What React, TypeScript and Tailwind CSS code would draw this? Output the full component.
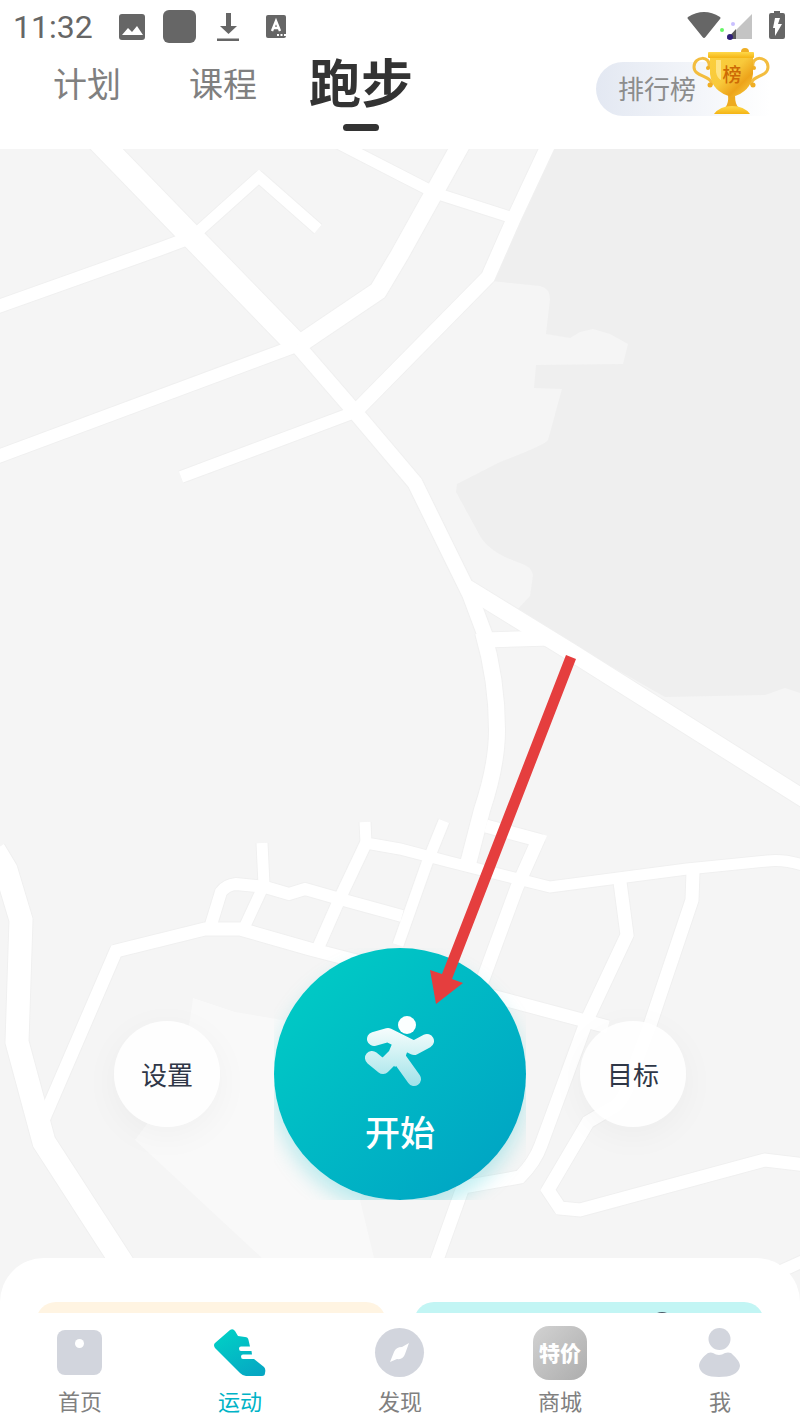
import React, { useState } from "react";

const TABS = ["计划", "课程", "跑步"];

interface Road {
  d: string;
  width: number;
}

const ROADS: Road[] = [
  { d: "M97 139L192 237L297 345", width: 23 },
  { d: "M192 237L160 249L-6 308", width: 13 },
  { d: "M192 237L259 177L318 229", width: 11 },
  { d: "M298 345L-6 458", width: 13 },
  { d: "M298 345L378 291L400 254L464 139", width: 18 },
  { d: "M297 345L355 412L415 483L470 595L485 635", width: 15 },
  { d: "M355 412L181 477", width: 12 },
  { d: "M355 412L488 277L514 218L551 139", width: 14 },
  { d: "M330 139L400 175L435 193L510 217", width: 11 },
  { d: "M467 588L571 652L806 800", width: 17 },
  { d: "M484 640L550 638", width: 15 },
  { d: "M483 632Q497 680 497 730Q497 765 482 810L468 864", width: 16 },
  { d: "M365 822L366 843L400 849L450 862L550 887L687 869L767 861Q785 859 806 866", width: 11 },
  { d: "M366 843L340 898L318 948", width: 12 },
  { d: "M444 821L427 863L398 945", width: 11 },
  { d: "M486 826L538 840L517 887L482 982", width: 13 },
  { d: "M210 928L221 892Q226 885 236 884L265 887L289 894L305 889L340 899L402 916", width: 12 },
  { d: "M262 843L264 885L244 928", width: 11 },
  { d: "M44 1118L116 951L205 929L240 929L310 949L507 1000L608 1027", width: 13 },
  { d: "M-6 850L6 870L21 920L17 1042L44 1142L128 1272", width: 23 },
  { d: "M620 882L627 935L587 1020L541 1145Q535 1162 520 1177L463 1187L434 1268", width: 13 },
  { d: "M693 872L692 900L650 1025L633 1070Q625 1102 612 1108L588 1122L548 1190L560 1208L580 1210L765 1160L806 1165", width: 13 },
  { d: "M770 1276L810 1258", width: 12 },
];

const StreetMap = () => (
  <svg
    className="absolute inset-0 h-full w-full"
    viewBox="0 149 800 1164"
    preserveAspectRatio="xMidYMin slice"
    aria-hidden="true"
  >
    <rect x="0" y="149" width="800" height="1164" fill="#f5f5f5" />
    <path
      d="M546 149H800V693L785 688L765 695L665 697L515 612L530 596L533 575Q531 566 520 563Q490 553 480 536L456 492L457 484L500 462Q545 445 548 440L562 389L534 388L536 365L623 364L628 344L610 334L593 329L580 332L570 338L546 334L550 300Q550 288 540 286L492 281L514 218Z"
      fill="#efefef"
    />
    <path d="M193 998L235 1012L400 1040L360 1200L374 1258H262L135 1140Q175 1090 190 1020Z" fill="#f9f9f9" />
    <g fill="none" stroke="#f0f0f0" strokeLinejoin="round">
      {ROADS.map((road) => (
        <path key={road.d} d={road.d} strokeWidth={road.width + 2} />
      ))}
    </g>
    <g fill="none" stroke="#ffffff">
      {ROADS.map((road) => (
        <path key={road.d} d={road.d} strokeWidth={road.width} />
      ))}
    </g>
  </svg>
);

const Pointer = () => (
  <svg
    className="pointer-events-none absolute inset-0 h-full w-full"
    viewBox="0 149 800 1164"
    preserveAspectRatio="xMidYMin slice"
    aria-hidden="true"
  >
    <path d="M566 655L576 659L452 979L463 983L436 1004L430 970L442 974Z" fill="#e53e3e" />
  </svg>
);

const StatusBar = () => (
  <div className="flex h-[54px] items-center pl-[13px] pr-1.5 text-[#666666]">
    <span className="w-[89px] font-['Roboto',sans-serif] text-[32px] font-normal leading-10">11:32</span>
    <div className="ml-3 flex flex-1 gap-3">
      <svg className="h-9 w-9" viewBox="0 0 36 36">
        <rect x="5" y="5" width="26" height="26" rx="3" fill="currentColor" />
        <path d="M8 26L14 19L18 23L23 17L29 26Z" fill="#fff" />
      </svg>
      <svg className="h-9 w-9" viewBox="0 0 36 36">
        <rect x="1" y="1" width="33" height="33" rx="6" fill="currentColor" />
      </svg>
      <svg className="h-9 w-9" viewBox="0 0 36 36" fill="currentColor">
        <path d="M16 4H21V17H27L18.500 25L10 17H16ZM7 29.500H29V32H7Z" />
      </svg>
      <svg className="h-9 w-9" viewBox="0 0 36 36">
        <rect x="8" y="6" width="20" height="23" rx="2" fill="currentColor" />
        <path d="M14 22L18 12L22 22M15 19H21" fill="none" stroke="#fff" strokeWidth="2.4" />
        <path d="M19 25H21V27H19ZM22.5 25H24.5V27H22.5ZM26 25H28V27H26Z" fill="#fff" />
      </svg>
    </div>
    <svg className="h-9 w-9" viewBox="0 0 36 36">
      <path d="M2 8Q18 -2 34 8Q35 9 34 10L19.500 28Q18 30 16.500 28L2 10Q1 9 2 8Z" fill="currentColor" />
    </svg>
    <svg className="h-9 w-9 overflow-visible" viewBox="0 0 36 36">
      <path d="M30 5V30H5Z" fill="#c4c4c4" />
      <path d="M14 20V30H5Z" fill="#5a5a5a" />
      <circle cx="8" cy="28" r="3" fill="#2f1e7a" />
      <circle cx="11" cy="15" r="2" fill="#c9c0ff" />
      <circle cx="0" cy="21" r="2" fill="#66f566" />
    </svg>
    <svg className="h-9 w-9" viewBox="0 0 36 36">
      <path d="M16 2H22V4H25Q27 4 27 6V28Q27 30 25 30H13Q11 30 11 28V6Q11 4 13 4H16Z" fill="currentColor" />
      <path d="M17 9H22L20 15H24L17 27V19H15Z" fill="#fff" />
    </svg>
  </div>
);

const Trophy = () => (
  <svg className="absolute -top-4 right-0 h-[70px] w-[78px]" viewBox="0 0 78 70" aria-hidden="true">
    <defs>
      <linearGradient id="cup" x1="0" y1="0" x2="1" y2="1">
        <stop offset="0" stopColor="#fbcf3c" />
        <stop offset="0.45" stopColor="#f8c93b" />
        <stop offset="0.7" stopColor="#eda31a" />
        <stop offset="1" stopColor="#fbd447" />
      </linearGradient>
      <linearGradient id="rim" x1="0" y1="0" x2="0" y2="1">
        <stop offset="0" stopColor="#ffd94a" />
        <stop offset="1" stopColor="#f4b414" />
      </linearGradient>
    </defs>
    <g fill="none" stroke="#f3bd3f" strokeWidth="3" strokeLinecap="round">
      <path d="M17 21C19 9 2 10 2 21C2 31 19 29 20 38" />
      <path d="M61 21C59 9 76 10 76 21C76 31 60 29 59 38" />
    </g>
    <g fill="#efae25">
      <circle cx="16" cy="22" r="2" />
      <circle cx="62" cy="22" r="2" />
      <circle cx="18" cy="39" r="2.500" />
      <circle cx="61" cy="39" r="2.500" />
      <circle cx="53" cy="6" r="4" />
    </g>
    <path d="M36 49H43Q43 59 47 62H33Q37 57 36 49Z" fill="#edaa20" />
    <path d="M22 68Q28 60 40 60Q52 60 58 68Z" fill="url(#rim)" />
    <path d="M18 10H61V28Q59 46 40 51Q20 46 18 28Z" fill="url(#cup)" />
    <path d="M24 14H29V34Q25 32 24 26Z" fill="#ffe993" opacity="0.8" />
    <rect x="16" y="6" width="46" height="6" rx="1" fill="url(#rim)" />
    <text
      x="40"
      y="36"
      fontSize="19"
      fontWeight="500"
      fill="#cd6a05"
      textAnchor="middle"
      fontFamily="'Noto Sans CJK SC', sans-serif"
    >
      榜
    </text>
  </svg>
);

const Runner = () => (
  <svg className="h-[72px] w-[72px]" viewBox="364 1015 72 72" aria-hidden="true">
    <defs>
      <linearGradient id="runner" gradientUnits="userSpaceOnUse" x1="400" y1="1022" x2="400" y2="1086">
        <stop offset="0" stopColor="#ffffff" />
        <stop offset="0.35" stopColor="#dff6f7" />
        <stop offset="1" stopColor="#a0e2e9" />
      </linearGradient>
    </defs>
    <circle cx="407" cy="1025" r="9" fill="#fbffff" />
    <g fill="none" stroke="url(#runner)" strokeWidth="14" strokeLinecap="round" strokeLinejoin="round">
      <path d="M374 1039L388 1035L414 1048L427 1041" />
      <path d="M372 1058L383 1067L395 1055L400 1043" />
      <path d="M399 1043L399 1058L414 1079" />
    </g>
    <path d="M390 1032L410 1044L405 1058L395 1067L390 1060L393 1044Z" fill="url(#runner)" />
  </svg>
);

const HomeIcon = () => (
  <svg className="h-[54px] w-[54px]" viewBox="0 0 54 54" fill="#d2d5dd">
    <rect x="4" y="4" width="45" height="45" rx="8" />
    <circle cx="26.500" cy="17.500" r="4.500" fill="#fff" />
  </svg>
);

const ShoeIcon = () => (
  <svg className="h-[54px] w-[54px]" viewBox="0 0 54 54">
    <defs>
      <linearGradient id="shoe" x1="0.2" y1="0" x2="0.8" y2="1">
        <stop offset="0" stopColor="#00d0c6" />
        <stop offset="1" stopColor="#06a7c3" />
      </linearGradient>
    </defs>
    <path
      d="M2 17L17 4Q20 2 22 5L25 10L32 11Q35 11 35.500 14L37 20.500H28Q26 20.500 26 22.500Q26 25 28 25H38.500L39 28.500H30Q28 28.500 28 30.500Q28 33 30 33H41L51 41Q53 43 52 47Q52 50 49 50H33Q30 50 27 47L2 22Q0 19 2 17Z"
      fill="url(#shoe)"
    />
  </svg>
);

const DiscoverIcon = () => (
  <svg className="h-[54px] w-[54px]" viewBox="0 0 54 54">
    <circle cx="26.500" cy="26.500" r="24.500" fill="#d2d5dd" />
    <path d="M36 17L32 28Q30 34 24 33L17 36L21 26Q23 21 29 21Z" fill="#fff" />
    <circle cx="26.500" cy="27" r="4" fill="#fff" />
  </svg>
);

const ShopIcon = () => (
  <span className="flex h-[54px] w-[54px] items-center justify-center rounded-2xl bg-gradient-to-br from-[#d2d2d2] to-[#adadad] text-[21px] font-black leading-none text-white">
    特价
  </span>
);

const MeIcon = () => (
  <svg className="h-[54px] w-[54px]" viewBox="0 0 54 54" fill="#d2d5dd">
    <circle cx="26.500" cy="13" r="11" />
    <path d="M15 27Q18 26 20 27Q26 31 32 27Q35 26 38 27C42 31 47 35 47 40C46 48 37 51 26 51C15 51 7 48 6 40C6 35 11 30 15 27Z" />
  </svg>
);

const NAV_ITEMS = [
  { label: "首页", icon: <HomeIcon /> },
  { label: "运动", icon: <ShoeIcon /> },
  { label: "发现", icon: <DiscoverIcon /> },
  { label: "商城", icon: <ShopIcon /> },
  { label: "我", icon: <MeIcon /> },
];

const App: React.FC = () => {
  const [activeTab, setActiveTab] = useState<string>("跑步");
  const [activeNav, setActiveNav] = useState<string>("运动");

  return (
    <div className="flex min-h-screen flex-col bg-white font-['Liberation_Sans','Noto_Sans_CJK_SC',sans-serif]">
      <StatusBar />
      <header className="flex h-[95px] items-start justify-between pl-[19px] pr-[30px]">
        <nav className="mt-0.5 flex h-[58px] items-center">
          {TABS.map((tab) => (
            <button
              key={tab}
              type="button"
              onClick={() => setActiveTab(tab)}
              className={`relative min-w-[136px] text-center ${
                activeTab === tab
                  ? "px-[18px] text-[52px] font-bold leading-[58px] text-[#333333]"
                  : "text-[34px] font-normal leading-[58px] text-[#808080]"
              }`}
            >
              {tab}
              {activeTab === tab && (
                <span className="absolute -bottom-[17px] left-1/2 h-[7px] w-9 -translate-x-1/2 rounded-full bg-[#333333]" />
              )}
            </button>
          ))}
        </nav>
        <button
          type="button"
          className="relative mt-2 h-[54px] w-[174px] rounded-l-full bg-gradient-to-r from-[#e3e8f2] to-white pl-[22px] pt-0.5 text-left text-[26px] font-normal text-[#8c8c8c]"
        >
          排行榜
          <Trophy />
        </button>
      </header>

      <main className="relative flex flex-1 flex-col justify-end overflow-hidden">
        <StreetMap />
        <div className="relative mb-[58px] flex items-center justify-center gap-[54px]">
          <button
            type="button"
            className="h-[106px] w-[106px] rounded-full bg-white/90 pt-1 text-[26px] font-normal text-[#2f3747] shadow-[0_8px_36px_rgba(0,0,0,0.04)]"
          >
            设置
          </button>
          <div className="overflow-hidden">
            <button
              type="button"
              className="flex h-[252px] w-[252px] flex-col items-center rounded-full bg-gradient-to-br from-[#00c8c5] from-15% to-[#00a7c4] to-85% pt-[67px] text-white shadow-[0_12px_20px_rgba(0,190,205,0.25)]"
            >
              <Runner />
              <span className="mt-[22px] text-[35px] font-medium leading-[50px]">开始</span>
            </button>
          </div>
          <button
            type="button"
            className="h-[106px] w-[106px] rounded-full bg-white/90 pt-1 text-[26px] font-normal text-[#2f3747] shadow-[0_8px_36px_rgba(0,0,0,0.04)]"
          >
            目标
          </button>
        </div>
        <section className="relative flex h-[55px] items-start gap-7 overflow-hidden rounded-t-[44px] bg-white px-9 pt-11">
          <div className="h-24 flex-1 rounded-[20px] bg-[#fff4e2]" />
          <div className="h-24 flex-1 rounded-[20px] bg-[#c2f5f4]">
            <svg className="ml-[240px] h-3 w-5" viewBox="0 0 20 12" aria-hidden="true">
              <path d="M1 12Q8 8 15 12Z" fill="#4b5563" />
            </svg>
          </div>
        </section>
        <Pointer />
      </main>

      <nav className="grid h-[109px] grid-cols-5 bg-white">
        {NAV_ITEMS.map((item) => (
          <button
            key={item.label}
            type="button"
            onClick={() => setActiveNav(item.label)}
            className={`flex flex-col items-center pt-[13px] text-[22px] ${
              activeNav === item.label ? "text-[#00b3c6]" : "text-[#808080]"
            }`}
          >
            {item.icon}
            <span className="mt-[7px] font-normal leading-8">{item.label}</span>
          </button>
        ))}
      </nav>
    </div>
  );
};

export default App;
